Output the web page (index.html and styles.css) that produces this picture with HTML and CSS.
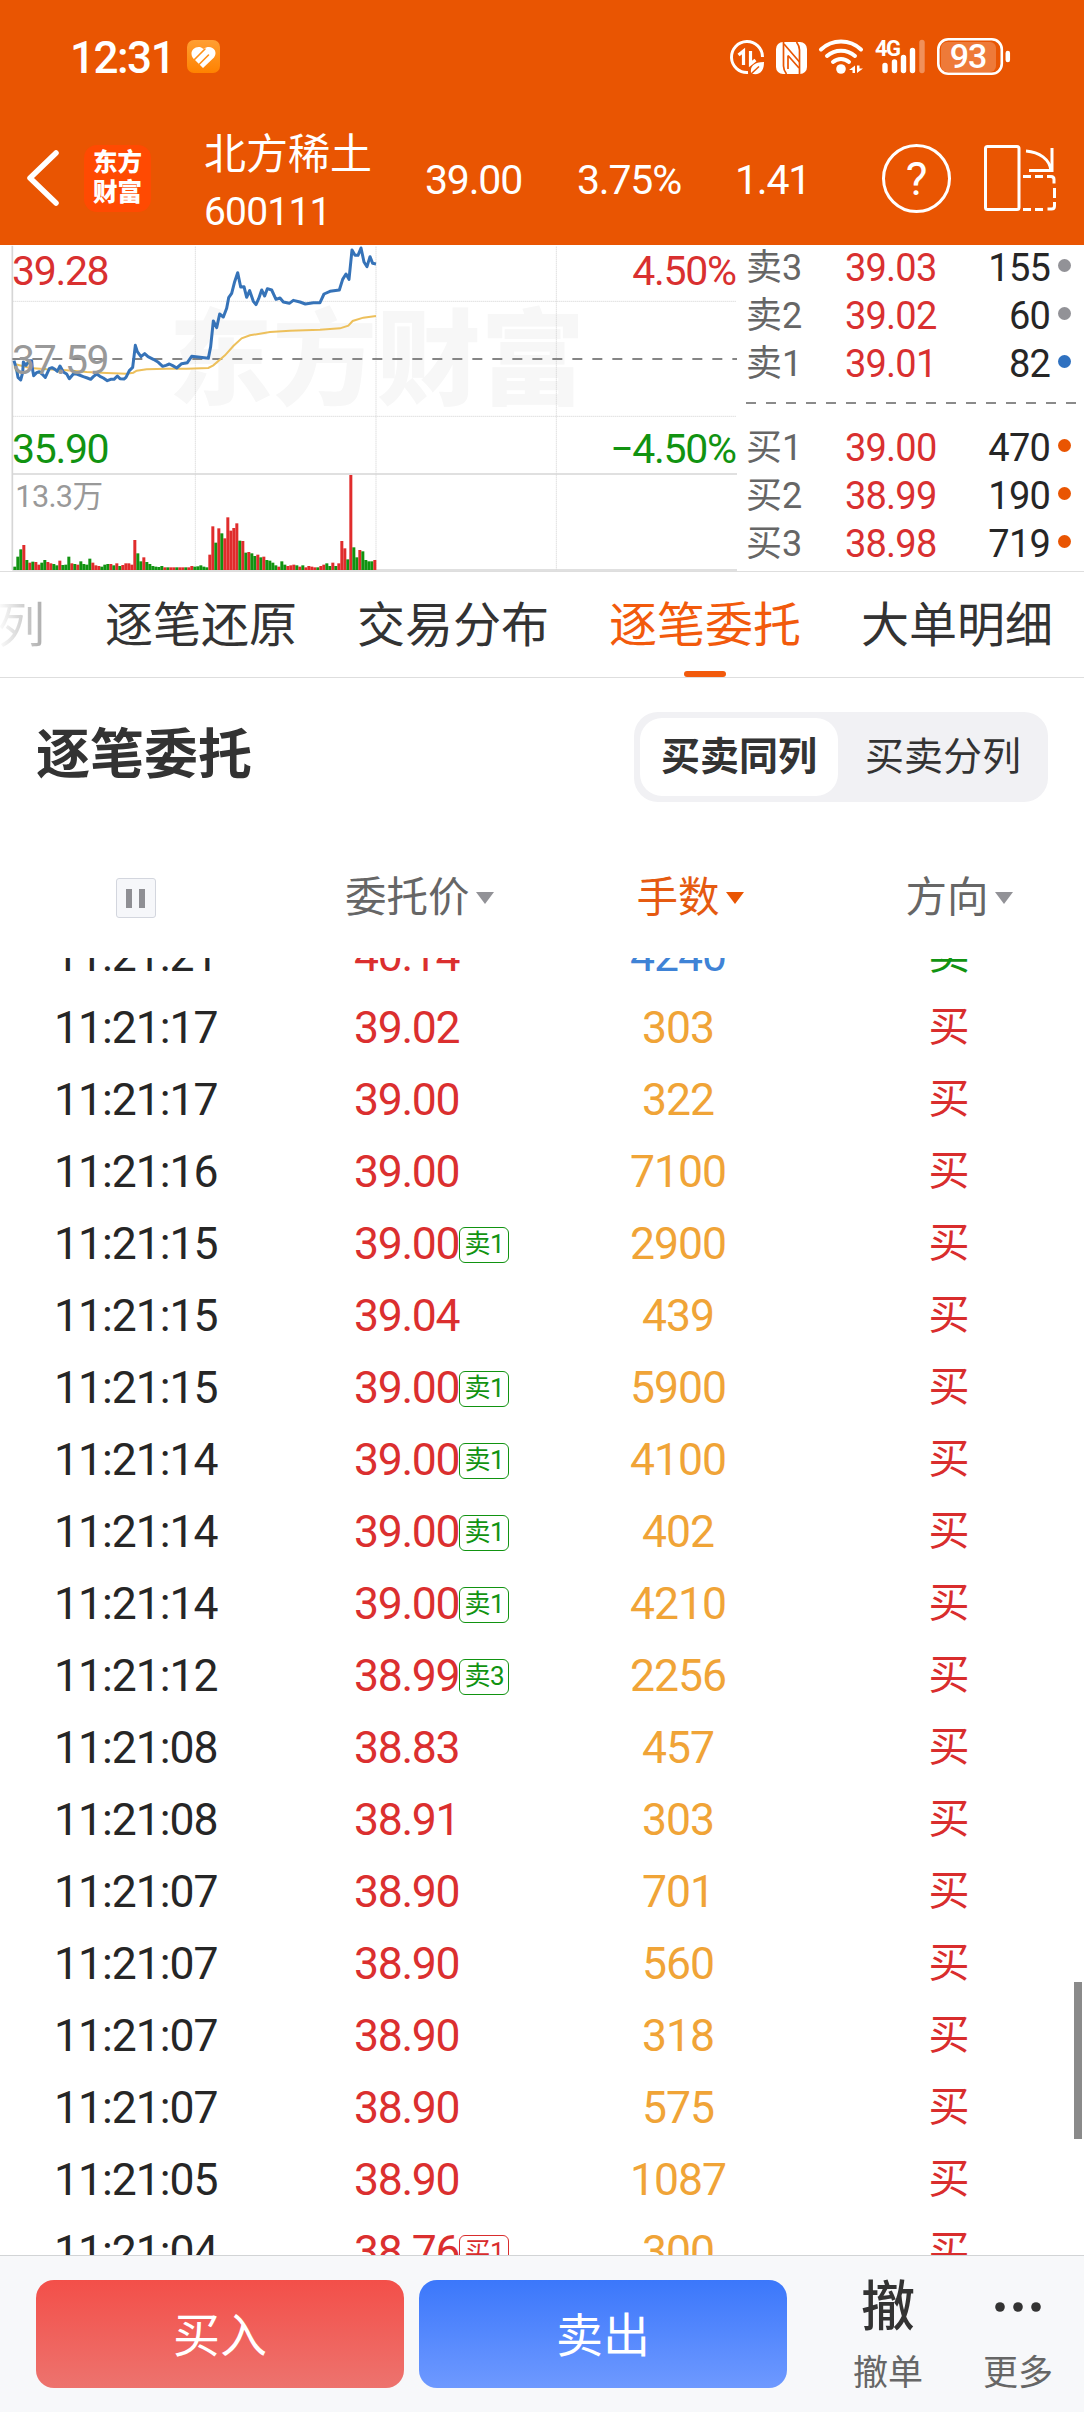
FILE: index.html
```html
<!DOCTYPE html>
<html lang="zh-CN">
<head>
    <meta charset="UTF-8">
    <meta name="viewport" content="width=device-width, initial-scale=1.0">
    <title>北方稀土 600111</title>
    <link rel="stylesheet" href="styles.css">
</head>
<body>
    <div class="page">
        <header class="header">
            <div class="status-bar">
                <span class="clock">12:31</span>
                <svg class="app-icon" width="33" height="33" viewBox="0 0 33 33">
                    <defs>
                        <linearGradient id="heart" x1="0" y1="0" x2="0" y2="1">
                            <stop offset="0" stop-color="#ff9f33"/>
                            <stop offset="1" stop-color="#ff8200"/>
                        </linearGradient>
                    </defs>
                    <rect width="33" height="33" rx="7" fill="url(#heart)"/>
                    <path d="M16.500 9C12 4.500 4 8 4.500 14c0 3 2 5 4 6.500l7.500 7.500L27 17.500C32 11 24 3.500 16.500 9z" fill="#fff"/>
                    <path d="M7 20L18 9M12 24.500L21.500 15" stroke="#ff9118" stroke-width="1.600" stroke-linecap="round"/>
                </svg>
                <svg class="status-icons" width="290" height="40" viewBox="724 36 290 40">
                    <!-- data saver -->
                    <path d="M762.500 56A15.500 15.500 0 1 0 748 71.500" fill="none" stroke="#fff" stroke-width="3"/>
                    <path d="M738.500 54l5-4v14M750.500 50v13l5-4" fill="none" stroke="#fff" stroke-width="3.200"/>
                    <path d="M751 72c-1-7 3-11 13-11 0 8-3 13-11 12z" fill="#fff"/>
                    <path d="M751 73l8-7.500" stroke="#e95502" stroke-width="1.500"/>
                    <!-- nfc -->
                    <rect x="776" y="41" width="31" height="32" rx="7" fill="#fff"/>
                    <path d="M783.500 41v24q0 4 3 8M799.500 73V49q0-4-3-8" fill="none" stroke="#e95502" stroke-width="1.700"/>
                    <path d="M784 43l15.500 18M788 54.500l11 12.500M788 54.500V68" fill="none" stroke="#e95502" stroke-width="1.700"/>
                    <!-- wifi -->
                    <g fill="none" stroke="#fff" stroke-width="4" stroke-linecap="round">
                        <path d="M821 48.500a29 29 0 0 1 40 0M827 55a21 21 0 0 1 28 0M833 61a12 12 0 0 1 16 0"/>
                    </g>
                    <circle cx="841" cy="68" r="4.800" fill="#fff"/>
                    <path d="M849 69l6-4.500V72h-2.500v-3zM857 64.500h2.500V67.500h3.500L857 72z" fill="#fff"/>
                    <!-- signal -->
                    <text x="875" y="55" class="net-type">4G</text>
                    <g stroke="#fff" stroke-width="5.400" stroke-linecap="round">
                        <path d="M885 64.500v5M894.500 61v8.500M903.500 56.500v13M912.500 49.500v20"/>
                        <path d="M922 41.500v28" opacity=".35"/>
                    </g>
                    <!-- battery -->
                    <rect x="941" y="41" width="55" height="30" rx="6" fill="#fff" opacity=".22"/>
                    <rect x="938.300" y="38.300" width="63.500" height="34.500" rx="10" fill="none" stroke="#fff" stroke-width="2.600"/>
                    <path d="M1007.800 52v7" stroke="#fff" stroke-width="4.500" stroke-linecap="round"/>
                    <text x="968" y="67" class="battery-text">93</text>
                </svg>
            </div>
            <div class="title-bar">
                <svg class="back" width="36" height="60" viewBox="0 0 36 60">
                    <path d="M31 5L5 30l26 25" fill="none" stroke="#fff" stroke-width="5.500" stroke-linecap="round" stroke-linejoin="round"/>
                </svg>
                <div class="logo"><span>东方</span><span>财富</span></div>
                <div class="stock">
                    <div class="stock-name">北方稀土</div>
                    <div class="stock-code">600111</div>
                </div>
                <span class="quote quote-price">39.00</span>
                <span class="quote quote-rate">3.75%</span>
                <span class="quote quote-diff">1.41</span>
                <div class="help"><span>?</span></div>
                <svg class="rotate" width="76" height="70" viewBox="984 142 76 70">
                    <g fill="none" stroke="#fff" stroke-width="3">
                        <rect x="987.500" y="145.500" width="33.500" height="63" rx="2"/>
                        <path d="M1028 150c13 1 24 8 25 20M1054 147v22.500h-23"/>
                        <path d="M1025 175.500h8M1037 175.500h8M1049 175.500h4q3 0 3 3v4M1056.500 187v10M1056.500 201v4q0 3-3 3h-4M1045 208.500h-8M1033 208.500h-8"/>
                    </g>
                </svg>
            </div>
        </header>

        <section class="market">
            <!-- intraday chart, 3 units per pixel -->
            <svg class="chart" width="740" height="326" viewBox="0 15 2220 978">
                <text class="watermark" x="506" y="470">东方财富</text>
                <g class="grid-dots">
                    <path d="M38 184H2210M38 529H2210M586 20V990M1128 20V990M1669 20V990"/>
                </g>
                <path class="grid-line" d="M37 17V990M37 702H2211M37 990H2211"/>
                <path class="mid-line" d="M37 357H2211"/>
                <g id="volume"></g>
                <polyline class="avg" points="44,372 90,384 140,388 200,391 260,396 320,399 380,401 400,398 410,392 440,388 500,386 560,386 625,384 640,376 675,346 700,318 725,295 750,286 810,276 870,272 960,269 1020,265 1045,257 1058,243 1090,233 1128,228"/>
                <polyline class="price" points="42,362 50,390 54,412 62,420 68,398 70,366 78,376 88,362 95,362 97,385 101,407 110,398 118,395 126,402 136,412 148,386 156,383 165,388 172,394 180,378 190,396 200,402 208,416 220,402 230,402 250,410 262,414 272,418 280,410 290,402 300,409 310,414 322,422 332,418 342,418 352,408 360,416 372,417 378,412 388,392 398,382 402,350 406,316 412,335 423,350 434,341 444,350 460,358 475,367 488,379 498,376 508,372 518,377 530,384 545,371 562,368 575,349 600,352 625,355 632,320 640,243 650,263 659,222 670,231 680,205 686,173 695,160 704,125 713,98 722,141 732,140 740,172 749,152 760,184 768,194 776,176 785,150 794,168 802,146 815,150 828,178 840,174 850,186 868,190 880,181 900,186 916,192 940,188 960,188 972,162 990,154 1018,150 1028,118 1038,102 1047,118 1056,30 1065,46 1074,46 1083,24 1092,66 1101,80 1110,50 1118,70 1128,72"/>
                <text class="label up" x="36" y="135">39.28</text>
                <text class="label flat" x="36" y="402">37.59</text>
                <text class="label down" x="36" y="669">35.90</text>
                <text class="label up end" x="2207" y="135">4.50%</text>
                <text class="label down end" x="2207" y="669">−4.50%</text>
                <text class="volume-label" x="46" y="800">13.3万</text>
            </svg>
            <div class="book">
                <div class="book-row"><span>卖3</span><b>39.03</b><em>155</em><i class="dot"></i></div>
                <div class="book-row"><span>卖2</span><b>39.02</b><em>60</em><i class="dot"></i></div>
                <div class="book-row"><span>卖1</span><b>39.01</b><em>82</em><i class="dot dot-blue"></i></div>
                <div class="book-divider"></div>
                <div class="book-row"><span>买1</span><b>39.00</b><em>470</em><i class="dot dot-orange"></i></div>
                <div class="book-row"><span>买2</span><b>38.99</b><em>190</em><i class="dot dot-orange"></i></div>
                <div class="book-row"><span>买3</span><b>38.98</b><em>719</em><i class="dot dot-orange"></i></div>
            </div>
        </section>

        <nav class="tabs">
            <span class="tab tab-cut">列</span>
            <span class="tab">逐笔还原</span>
            <span class="tab">交易分布</span>
            <span class="tab active">逐笔委托</span>
            <span class="tab">大单明细</span>
        </nav>

        <section class="section-head">
            <h2>逐笔委托</h2>
            <div class="switch">
                <span class="switch-item on">买卖同列</span>
                <span class="switch-item">买卖分列</span>
            </div>
        </section>

        <div class="list-head">
            <div class="head-cell"><span class="pause"></span></div>
            <div class="head-cell">委托价<i class="arrow"></i></div>
            <div class="head-cell sorted">手数<i class="arrow"></i></div>
            <div class="head-cell">方向<i class="arrow"></i></div>
        </div>
        <div class="list">
            <div id="rows"></div>
            <div class="scrollbar"></div>
        </div>

        <footer class="footer">
            <button class="trade buy">买入</button>
            <button class="trade sell">卖出</button>
            <div class="tool">
                <span class="tool-icon">撤</span>
                <span class="tool-text">撤单</span>
            </div>
            <div class="tool tool-more">
                <span class="tool-icon"><svg width="48" height="12" viewBox="0 0 48 12"><circle cx="6" cy="6" r="4.800"/><circle cx="24" cy="6" r="4.800"/><circle cx="42" cy="6" r="4.800"/></svg></span>
                <span class="tool-text">更多</span>
            </div>
        </footer>
    </div>
    <script src="script.js"></script>
</body>
</html>
```
FILE: styles.css
```css
* {
    box-sizing: border-box;
}

body {
    margin: 0;
    background: #fff;
    color: #262626;
    font-family: Roboto, "Noto Sans CJK SC", sans-serif;
}

.page {
    width: 1084px;
    height: 2412px;
    display: flex;
    flex-direction: column;
    overflow: hidden;
}

/* Header */
.header {
    height: 245px;
    background: #e95502;
    color: #fff;
    flex: none;
}

.status-bar {
    height: 113px;
    padding: 0 70px 0 70px;
    display: flex;
    align-items: center;
}

.clock {
    width: 117px;
    font-size: 44px;
    font-weight: 500;
    line-height: 60px;
    letter-spacing: -1.5px;
    padding-top: 2px;
}

.status-icons {
    margin-left: auto;
}

.net-type {
    font-size: 22px;
    font-weight: 700;
    fill: #fff;
    letter-spacing: -1.5px;
}

.battery-text {
    font-size: 34px;
    font-weight: 500;
    fill: #fff;
    text-anchor: middle;
    letter-spacing: -1px;
}

.title-bar {
    height: 132px;
    display: flex;
    align-items: center;
    padding: 0 23px 2px 25px;
}

.logo {
    width: 67px;
    height: 67px;
    margin-left: 23px;
    border-radius: 13px;
    background: #ff4a02;
    font-family: "Noto Sans CJK SC", sans-serif;
    font-size: 24.5px;
    font-weight: 900;
    line-height: 30px;
    padding-top: 1px;
    display: flex;
    flex-direction: column;
    align-items: center;
}

.stock {
    width: 221px;
    margin-left: 53px;
}

.stock-name {
    font-size: 42px;
    line-height: 54px;
    padding-top: 7px;
}

.stock-code {
    font-size: 39px;
    line-height: 46px;
    letter-spacing: -.8px;
    margin-top: 7px;
}

.quote {
    font-size: 41px;
    letter-spacing: -1.2px;
    padding-top: 3px;
}

.quote-price {
    width: 152px;
}

.quote-rate {
    width: 158px;
}

.quote-diff {
    width: 147px;
}

.help {
    width: 69px;
    height: 69px;
    border: 3px solid #fff;
    border-radius: 50%;
    font-size: 46px;
    line-height: 65px;
    text-align: center;
    flex: none;
}

.rotate {
    margin-left: 31px;
    flex: none;
}

/* Chart and order book */
.market {
    height: 327px;
    display: flex;
    flex: none;
    overflow: hidden;
    border-bottom: 1px solid #dedede;
}

.chart {
    flex: none;
}

.watermark {
    font-family: "Noto Sans CJK SC", sans-serif;
    font-size: 312px;
    font-weight: 900;
    fill: #f7f7f7;
}

.grid-dots {
    fill: none;
    stroke: #cfcfcf;
    stroke-width: 3;
    stroke-dasharray: 3 3;
}

.grid-line {
    fill: none;
    stroke: #d6d6d6;
    stroke-width: 5;
}

.mid-line {
    stroke: #858585;
    stroke-width: 6;
    stroke-dasharray: 30 30;
}

.avg {
    fill: none;
    stroke: #edc05c;
    stroke-width: 6;
}

.price {
    fill: none;
    stroke: #3673b8;
    stroke-width: 9;
    stroke-linejoin: round;
}

.label {
    font-size: 123px;
    letter-spacing: -4px;
}

.end {
    text-anchor: end;
}

.up {
    fill: #d93030;
}

.down {
    fill: #119311;
}

.flat {
    fill: #999;
}

.volume-label {
    font-size: 92px;
    letter-spacing: -2px;
    fill: #999;
}

.bar-up {
    fill: #e02c2c;
}

.bar-down {
    fill: #119311;
}

.book {
    width: 344px;
    padding-left: 6px;
    margin-top: -1px;
}

.book-row {
    display: flex;
    align-items: center;
    height: 48px;
    font-size: 38px;
    line-height: 48px;
    letter-spacing: -.8px;
}

.book-row span {
    width: 99px;
    color: #666;
    font-size: 36px;
    letter-spacing: 0;
}

.book-row b {
    width: 110px;
    font-weight: 400;
    color: #d93030;
}

.book-row em {
    width: 95px;
    font-style: normal;
    text-align: right;
}

.dot {
    width: 13px;
    height: 13px;
    margin: -5px 0 0 8px;
    border-radius: 50%;
    background: #929297;
}

.dot-blue {
    background: #2f71c0;
}

.dot-orange {
    background: #e95502;
}

.book-divider {
    height: 2px;
    margin: 14px 8px 20px 0;
    background: repeating-linear-gradient(90deg, #8a8a8a 0 10px, transparent 10px 20px);
}

/* Tabs */
.tabs {
    height: 106px;
    display: flex;
    flex: none;
    gap: 60px;
    border-bottom: 1px solid #dedede;
}

.tab {
    position: relative;
    font-size: 48px;
    line-height: 107px;
    color: #333;
    white-space: nowrap;
}

.tab-cut {
    margin-left: -3px;
    background: linear-gradient(90deg, #fff, #aaa);
    -webkit-background-clip: text;
    background-clip: text;
    color: transparent;
}

.active {
    color: #f25a0c;
}

.active::after {
    content: "";
    position: absolute;
    left: 75px;
    bottom: 0;
    width: 42px;
    height: 6px;
    border-radius: 3px;
    background: #f25a0c;
}

/* Section title */
.section-head {
    height: 158px;
    padding: 0 36px;
    display: flex;
    flex: none;
    justify-content: space-between;
    align-items: center;
}

.section-head h2 {
    margin: 0;
    font-size: 54px;
    font-weight: 700;
    line-height: 70px;
    padding-bottom: 2px;
    color: #333;
}

.switch {
    display: flex;
    width: 414px;
    height: 90px;
    margin-bottom: 1px;
    padding: 6px;
    border-radius: 24px;
    background: #f1f1f4;
}

.switch-item {
    width: 198px;
    line-height: 79px;
    border-radius: 22px;
    font-size: 39px;
    color: #333;
    text-align: center;
}

.switch-item + .switch-item {
    width: 204px;
    padding-left: 6px;
}

.on {
    background: #fff;
    font-weight: 700;
}

/* Order list */
.list-head {
    height: 122px;
    display: grid;
    grid-template-columns: 291px 209px 272px 266px;
    align-items: center;
    padding: 1px 0 0 54px;
    flex: none;
}

.head-cell {
    display: flex;
    align-items: center;
    font-size: 41.5px;
    line-height: 60px;
    color: #666;
}

.head-cell:nth-child(n+3) {
    justify-content: center;
}

.pause {
    width: 40px;
    height: 40px;
    margin-left: 62px;
    border: 1px solid #d3d6de;
    border-radius: 3px;
    background: linear-gradient(#8f8f94, #8f8f94) 9px 10px / 6px 19px no-repeat, linear-gradient(#8f8f94, #8f8f94) 22px 10px / 6px 19px no-repeat, #f6f7fa;
}

.arrow {
    width: 0;
    height: 0;
    margin-left: 6px;
    border: 9px solid transparent;
    border-top: 12px solid #929297;
    border-bottom: 0;
}

.sorted {
    color: #e55a10;
}

.sorted .arrow {
    border-top-color: #e95502;
}

.list {
    position: relative;
    flex: 1;
    overflow: hidden;
}

#rows {
    margin-top: -38px;
}

.row {
    display: grid;
    grid-template-columns: 300px 188px 272px 270px;
    height: 72px;
    padding-left: 54px;
    font-size: 44.5px;
    line-height: 72px;
    letter-spacing: -1px;
}

.cell-price {
    display: flex;
    align-items: center;
    color: #db2f2f;
    letter-spacing: -1.3px;
}

.cell-count {
    text-align: center;
    color: #f0a437;
}

.cell-side {
    font-size: 41px;
    line-height: 71px;
    text-align: center;
    letter-spacing: 0;
}

.blue {
    color: #3f83d6;
}

.red {
    color: #d92d2d;
}

.green {
    color: #119311;
}

.tag {
    width: 50px;
    height: 36px;
    margin-top: 1px;
    border: 1px solid;
    border-radius: 6px;
    font-size: 26px;
    line-height: 33px;
    text-align: center;
    letter-spacing: -.5px;
}

.scrollbar {
    position: absolute;
    right: 2px;
    top: 1024px;
    width: 8px;
    height: 157px;
    background: #8a8a8a;
}

/* Footer */
.footer {
    height: 157px;
    flex: none;
    display: flex;
    padding: 24px 0 0 36px;
    border-top: 1px solid #d2d4d6;
    background: #f7f8fa;
}

.trade {
    width: 368px;
    height: 108px;
    margin-right: 15px;
    padding: 0 0 5px;
    border: 0;
    border-radius: 18px;
    color: #fff;
    font-family: inherit;
    font-size: 47px;
}

.buy {
    background: linear-gradient(#f34f49, #ed736e);
}

.sell {
    background: linear-gradient(#3b77fb, #6e99ff);
}

.tool {
    width: 130px;
    margin-left: 21px;
    display: flex;
    flex-direction: column;
    align-items: center;
}

.tool-more {
    margin-left: 0;
}

.tool-icon {
    height: 56px;
    display: flex;
    align-items: center;
    font-size: 54px;
    font-weight: 500;
    line-height: 56px;
    color: #333;
    fill: #333;
}

.tool-more .tool-icon {
    padding-bottom: 2px;
}

.tool-text {
    font-size: 35px;
    line-height: 44px;
    padding-top: 16px;
    color: #666;
}
```
FILE: script.js
```js
// volume bars: colour and height
const bars = 'g10 g40 g62 r75 g30 r22 g25 r24 r16 g22 g30 r24 r20 g18 g14 r28 g15 g16 g40 r20 g18 r16 g26 g18 g16 g34 r22 r14 r12 g10 g16 g18 r18 g14 r20 g12 r15 r20 r20 r16 r90 g50 g26 r38 g24 g18 g12 g10 g9 g12 r8 g8 r8 r8 g8 r8 r8 g8 r8 r12 g10 g11 g14 g10 g8 r46 r131 g82 r125 g110 r95 r158 r118 r126 r140 g88 r87 g52 r54 g50 g42 r46 g38 r40 g30 g28 g22 g14 r10 g26 g16 r12 r14 r16 g14 r10 g14 r8 r12 r10 r8 g8 r12 r16 g20 g12 r22 g12 r20 r87 r65 g32 r285 g68 g38 r60 g56 g30 g26 g26 r30';

document.getElementById('volume').innerHTML = bars.split(' ').map((bar, i) => {
    const height = parseInt(bar.slice(1));
    const cls = bar[0] === 'r' ? 'bar-up' : 'bar-down';
    return `<rect class="${cls}" x="${40 + i * 9}" y="${990 - height}" width="9" height="${height}"/>`;
}).join('');

const orders = [
    ['11:21:21', '40.14', '4240', '卖'],
    ['11:21:17', '39.02', '303', '买'],
    ['11:21:17', '39.00', '322', '买'],
    ['11:21:16', '39.00', '7100', '买'],
    ['11:21:15', '39.00', '2900', '买', '卖1'],
    ['11:21:15', '39.04', '439', '买'],
    ['11:21:15', '39.00', '5900', '买', '卖1'],
    ['11:21:14', '39.00', '4100', '买', '卖1'],
    ['11:21:14', '39.00', '402', '买', '卖1'],
    ['11:21:14', '39.00', '4210', '买', '卖1'],
    ['11:21:12', '38.99', '2256', '买', '卖3'],
    ['11:21:08', '38.83', '457', '买'],
    ['11:21:08', '38.91', '303', '买'],
    ['11:21:07', '38.90', '701', '买'],
    ['11:21:07', '38.90', '560', '买'],
    ['11:21:07', '38.90', '318', '买'],
    ['11:21:07', '38.90', '575', '买'],
    ['11:21:05', '38.90', '1087', '买'],
    ['11:21:04', '38.76', '300', '买', '买1']
];

document.getElementById('rows').innerHTML = orders.map(([time, price, count, side, tag]) => {
    const color = text => text[0] === '买' ? 'red' : 'green';
    return `<div class="row">
        <span>${time}</span>
        <span class="cell-price">${price}${tag ? `<span class="tag ${color(tag)}">${tag}</span>` : ''}</span>
        <span class="cell-count ${side === '卖' ? 'blue' : ''}">${count}</span>
        <span class="cell-side ${color(side)}">${side}</span>
    </div>`;
}).join('');
```
